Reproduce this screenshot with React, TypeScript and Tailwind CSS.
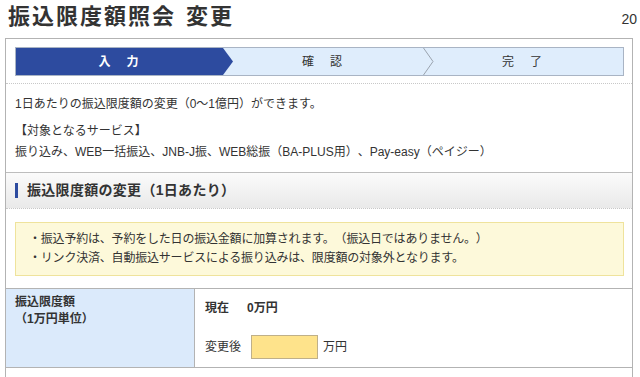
import React from "react";

export default function App() {
  return (
    <div className="w-[640px] h-[377px] overflow-hidden bg-white text-[#333] [text-spacing-trim:space-all] font-['Liberation_Sans','Noto_Sans_CJK_JP',sans-serif]">
      <div className="flex items-start justify-between h-[38px]">
        <h1 className="ml-[8px] mt-[1px] text-[22px] leading-[32px] font-bold tracking-[2px] text-[#333]">
          振込限度額照会<span className="ml-[10px]">変更</span>
        </h1>
        <span className="mt-[9px] mr-[3px] text-[14px] leading-[20px] text-[#333]">20</span>
      </div>

      <div className="ml-[5px] w-[628px] border border-b-0 border-[#b3b3b3]">
        {/* Steps */}
        <div className="pl-[9px] pr-[8px] pt-[8px] pb-[7px] border-b border-dotted border-[#c8c8c8]">
          <div className="flex h-[29px] border border-[#a9b4c4] bg-[#dfedfc] text-[12px]">
            <div className="relative w-[207px] bg-[#2d4b9f] flex items-center justify-center text-white font-bold tracking-[2px]">
              入　力
              <div className="absolute left-full top-0 h-full w-[10px] bg-[#2d4b9f] [clip-path:polygon(0_0,100%_50%,0_100%)]" />
            </div>
            <div className="w-[200px] flex items-center justify-center tracking-[2px]">確　認</div>
            <div className="relative flex-1 flex items-center justify-center tracking-[2px]">
              <svg className="absolute left-0 top-0 h-full" width="11" height="27" viewBox="0 0 11 27">
                <polyline points="0.5,0 10,13.5 0.5,27" fill="none" stroke="#9aa3ae" strokeWidth="1" />
              </svg>
              完　了
            </div>
          </div>
        </div>

        {/* Intro */}
        <div className="px-[9px] pt-[10px] pb-[9px] text-[12px] leading-[21px]">
          <p>1日あたりの振込限度額の変更（0〜1億円）ができます。</p>
          <p className="mt-[6px]">【対象となるサービス】</p>
          <p>振り込み、WEB一括振込、JNB-J振、WEB総振（BA-PLUS用）、Pay-easy（ペイジー）</p>
        </div>

        {/* Section header */}
        <div className="h-[37px] border-t border-[#bdbdbd] border-b border-b-[#c8c8c8] [border-bottom-style:dotted] bg-gradient-to-b from-[#fbfbfb] to-[#e9e9e9] flex items-center pl-[9px]">
          <span className="w-[3px] h-[15px] bg-[#2d4b9f] mr-[9px]" />
          <span className="text-[14px] font-bold tracking-[0.3px]">振込限度額の変更（1日あたり）</span>
        </div>

        {/* Notice */}
        <div className="pl-[9px] pr-[8px] pt-[13px] pb-[12px]">
          <div className="border border-[#efe39c] bg-[#fdf9da] pl-[13px] py-[7px] text-[12px] leading-[19px] tracking-[-0.2px]">
            <p>・振込予約は、予約をした日の振込金額に加算されます。（振込日ではありません。）</p>
            <p>・リンク決済、自動振込サービスによる振り込みは、限度額の対象外となります。</p>
          </div>
        </div>

        {/* Table */}
        <div className="flex border-t border-b border-[#b3b3b3] text-[12px]">
          <div className="w-[189px] bg-[#dbeafb] border-r border-[#b3b3b3] pl-[9px] pt-[5px] font-bold leading-[17px]">
            <p>振込限度額</p>
            <p>（1万円単位）</p>
          </div>
          <div className="flex-1 pl-[10px] pt-[9px] pb-[8px]">
            <p className="font-bold leading-[20px]">
              現在<span className="ml-[18px]">0万円</span>
            </p>
            <div className="mt-[17px] flex items-center h-[24px]">
              <span>変更後</span>
              <div className="ml-[10px] w-[67px] h-[24px] border border-[#bfb089] bg-[#fee38b]" />
              <span className="ml-[5px]">万円</span>
            </div>
          </div>
        </div>
        <div className="h-[20px]" />
      </div>
    </div>
  );
}
